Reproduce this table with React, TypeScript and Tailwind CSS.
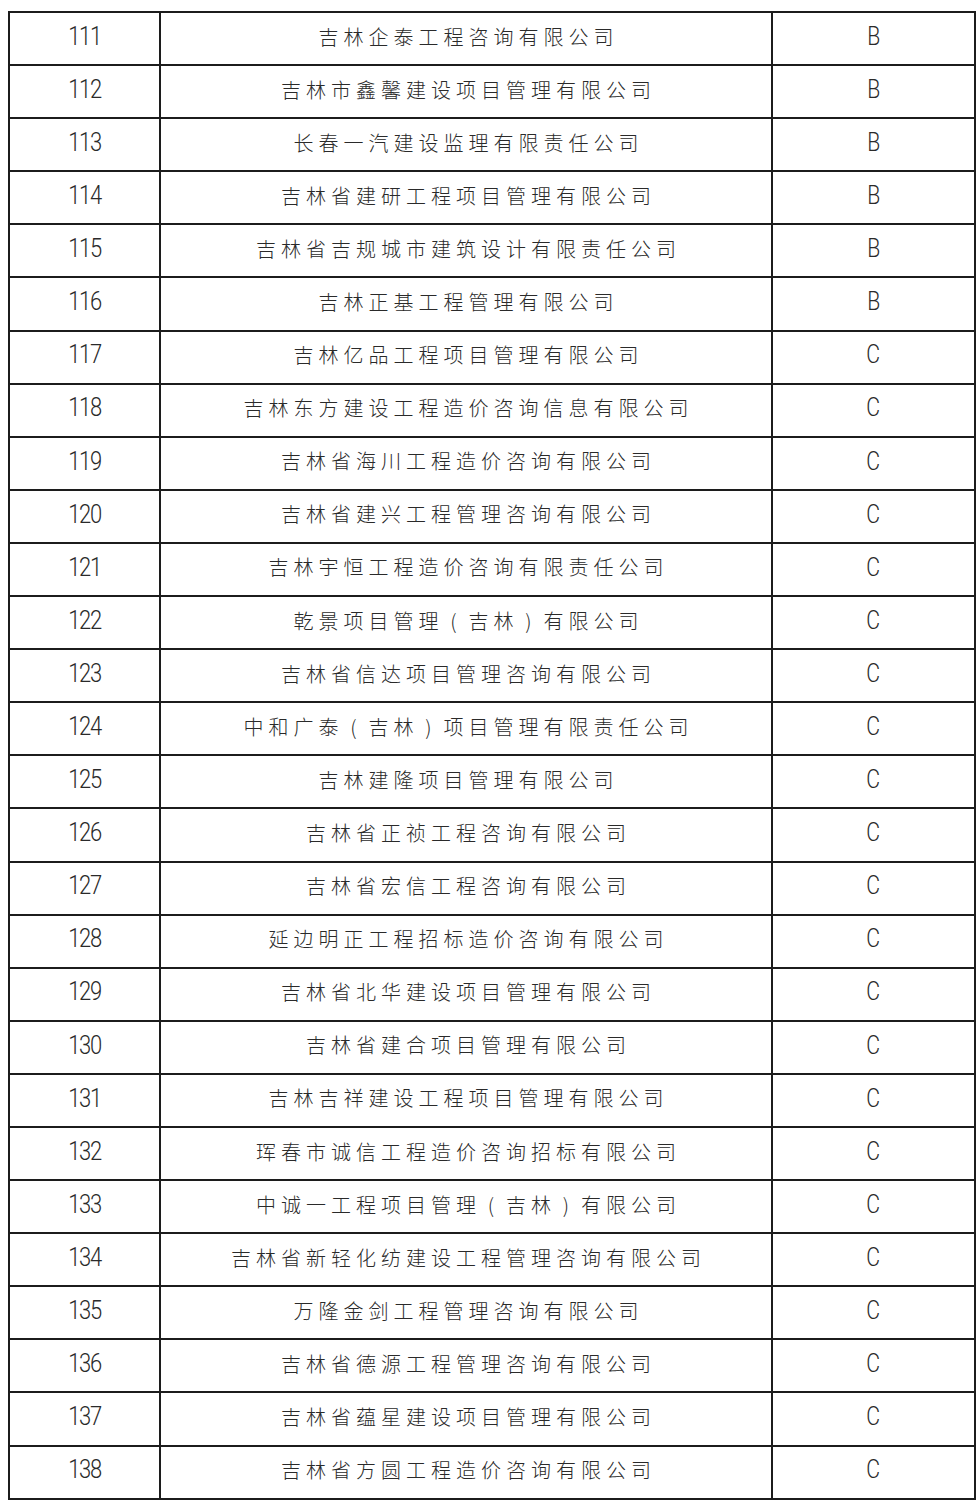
const rows: [number, string, string][] = [
  [111, "吉林企泰工程咨询有限公司", "B"],
  [112, "吉林市鑫馨建设项目管理有限公司", "B"],
  [113, "长春一汽建设监理有限责任公司", "B"],
  [114, "吉林省建研工程项目管理有限公司", "B"],
  [115, "吉林省吉规城市建筑设计有限责任公司", "B"],
  [116, "吉林正基工程管理有限公司", "B"],
  [117, "吉林亿品工程项目管理有限公司", "C"],
  [118, "吉林东方建设工程造价咨询信息有限公司", "C"],
  [119, "吉林省海川工程造价咨询有限公司", "C"],
  [120, "吉林省建兴工程管理咨询有限公司", "C"],
  [121, "吉林宇恒工程造价咨询有限责任公司", "C"],
  [122, "乾景项目管理（吉林）有限公司", "C"],
  [123, "吉林省信达项目管理咨询有限公司", "C"],
  [124, "中和广泰（吉林）项目管理有限责任公司", "C"],
  [125, "吉林建隆项目管理有限公司", "C"],
  [126, "吉林省正祯工程咨询有限公司", "C"],
  [127, "吉林省宏信工程咨询有限公司", "C"],
  [128, "延边明正工程招标造价咨询有限公司", "C"],
  [129, "吉林省北华建设项目管理有限公司", "C"],
  [130, "吉林省建合项目管理有限公司", "C"],
  [131, "吉林吉祥建设工程项目管理有限公司", "C"],
  [132, "珲春市诚信工程造价咨询招标有限公司", "C"],
  [133, "中诚一工程项目管理（吉林）有限公司", "C"],
  [134, "吉林省新轻化纺建设工程管理咨询有限公司", "C"],
  [135, "万隆金剑工程管理咨询有限公司", "C"],
  [136, "吉林省德源工程管理咨询有限公司", "C"],
  [137, "吉林省蕴星建设项目管理有限公司", "C"],
  [138, "吉林省方圆工程造价咨询有限公司", "C"],
];

// full-width brackets sit centred in their cell in the scan
const renderName = (name: string) =>
  name.split(/([（）])/).map((part, i) =>
    part === "（" || part === "）" ? (
      <span key={i} className="inline-block w-[20px] mr-[5px] text-center tracking-normal">
        {part === "（" ? "(" : ")"}
      </span>
    ) : (
      part
    )
  );

export default function App() {
  return (
    <div className="w-[980px] h-[1512px] bg-white pt-[11px] pl-[8px]">
      <div className="w-[968px] border-t-2 border-l-2 border-r-2 border-[#1c1c1c]">
        {rows.map(([num, name, grade]) => (
          <div
            key={num}
            className="flex h-[53.1px] border-b-2 border-[#1c1c1c] text-[#2a2a2a]"
          >
            <div className="w-[151px] shrink-0 border-r-2 border-[#1c1c1c] flex items-center justify-center pb-[4px] font-['Roboto',sans-serif] font-light text-[25px]">
              <span className="inline-block tracking-[-1.5px] scale-x-[0.88]">{num}</span>
            </div>
            <div className="w-[612px] shrink-0 border-r-2 border-[#1c1c1c] flex items-center justify-center pb-[4px] font-['Noto_Sans_CJK_SC',sans-serif] font-light text-[20px] tracking-[5px] pl-[5px]">
              {renderName(name)}
            </div>
            <div className="flex-1 flex items-center justify-center pb-[4px] font-['Roboto',sans-serif] font-light text-[25px]">
              <span className="inline-block scale-x-[0.85]">{grade}</span>
            </div>
          </div>
        ))}
      </div>
    </div>
  );
}
